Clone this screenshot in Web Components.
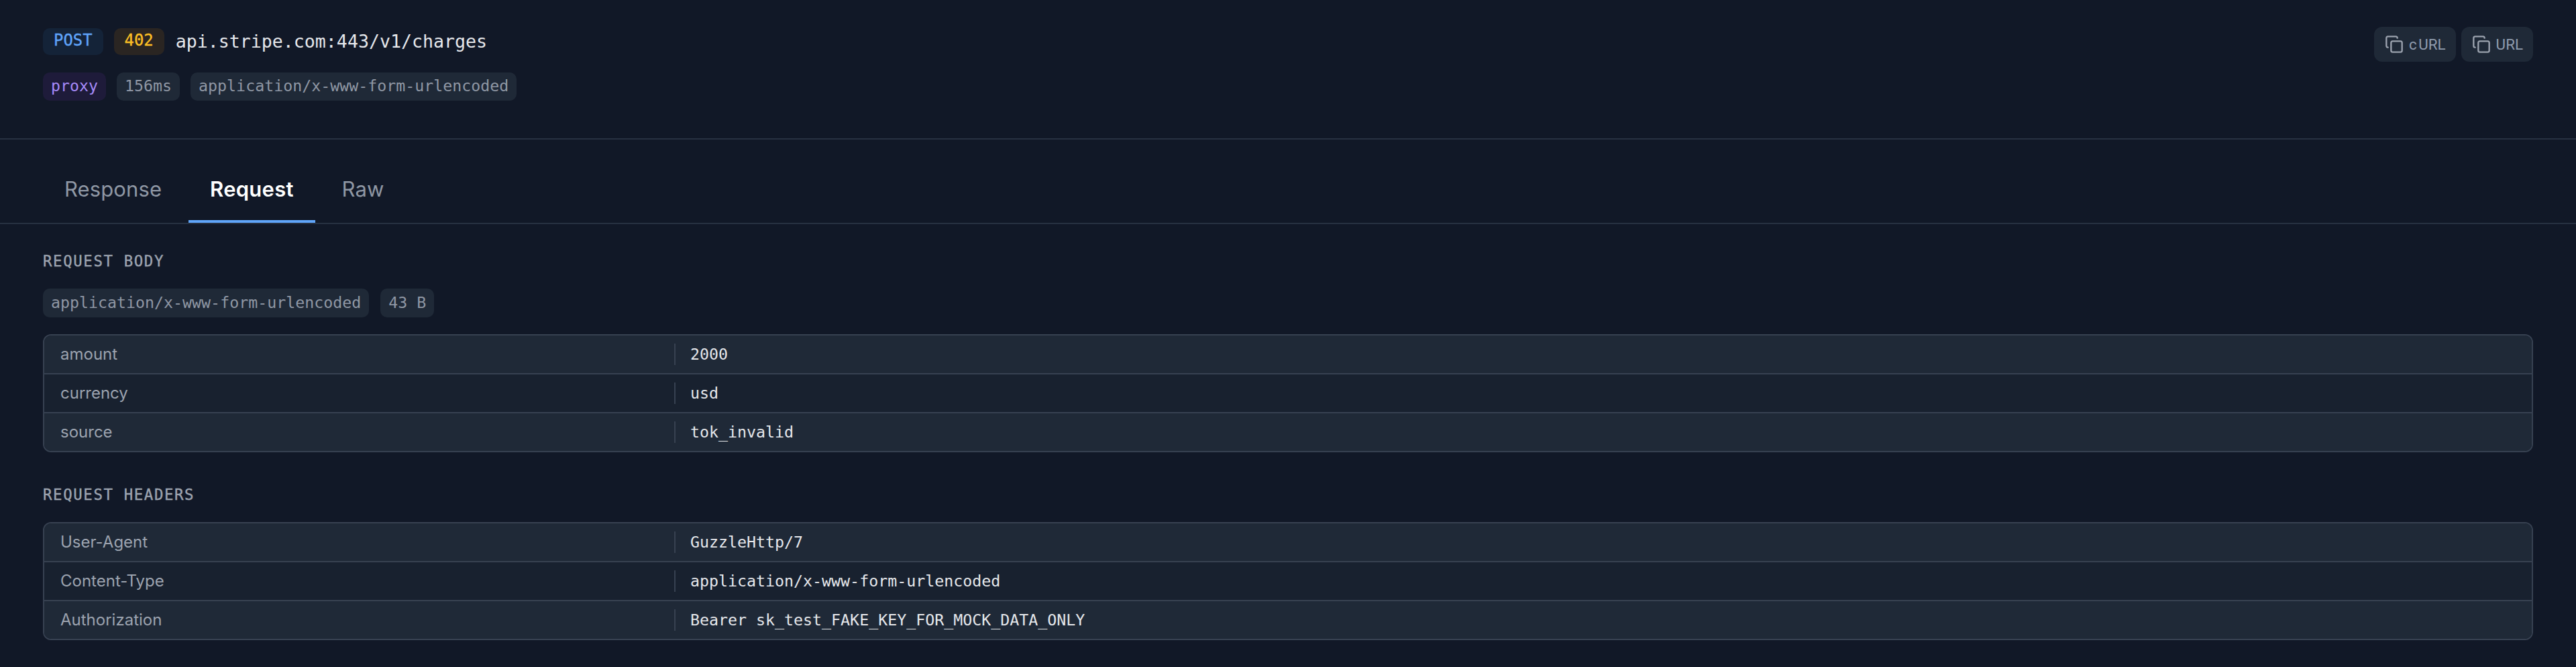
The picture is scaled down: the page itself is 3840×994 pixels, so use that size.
<!DOCTYPE html>
<html lang="en"><head><meta charset="utf-8"><title>Request detail</title>
<style>
html,body{margin:0;padding:0;background:#111827;}
body{font-family:Inter,"Noto Sans",sans-serif;color:#e5e7eb;}
</style></head>
<body>
<x-panel>
  <x-header slot="header">
    <x-badge slot="line1" kind="post" size="lg">POST</x-badge>
    <x-badge slot="line1" kind="warn" size="lg">402</x-badge>
    <x-url slot="line1">api.stripe.com:443/v1/charges</x-url>
    <x-badge slot="line2" kind="proxy" h="42">proxy</x-badge>
    <x-badge slot="line2" h="42">156ms</x-badge>
    <x-badge slot="line2" h="42">application/x-www-form-urlencoded</x-badge>
    <x-copy slot="actions"><span style="letter-spacing:2.4px">c</span>URL</x-copy>
    <x-copy slot="actions">URL</x-copy>
  </x-header>
  <x-tabs slot="tabs">
    <x-tab>Response</x-tab>
    <x-tab active>Request</x-tab>
    <x-tab>Raw</x-tab>
  </x-tabs>
  <x-section title="REQUEST BODY">
    <x-badge slot="meta">application/x-www-form-urlencoded</x-badge>
    <x-badge slot="meta">43 B</x-badge>
    <x-kv-table>
      <x-kv-row k="amount">2000</x-kv-row>
      <x-kv-row k="currency">usd</x-kv-row>
      <x-kv-row k="source">tok_invalid</x-kv-row>
    </x-kv-table>
  </x-section>
  <x-section title="REQUEST HEADERS">
    <x-kv-table>
      <x-kv-row k="User-Agent">GuzzleHttp/7</x-kv-row>
      <x-kv-row k="Content-Type">application/x-www-form-urlencoded</x-kv-row>
      <x-kv-row k="Authorization">Bearer sk_test_FAKE_KEY_FOR_MOCK_DATA_ONLY</x-kv-row>
    </x-kv-table>
  </x-section>
</x-panel>
<script>
const MONO='"DejaVu Sans Mono","Liberation Mono",monospace';
function def(name,html,extra){
  customElements.define(name,class extends HTMLElement{
    constructor(){super();this.attachShadow({mode:'open'}).innerHTML=html(this);}
    connectedCallback(){ if(extra) extra(this); }
  });
}
def('x-panel',()=>`<style>:host{display:block;background:#111827;min-height:994px}
main{padding:40px 64px 40px;display:flex;flex-direction:column;gap:48px}</style>
<slot name="header"></slot><slot name="tabs"></slot><main><slot></slot></main>`);
def('x-header',()=>`<style>:host{display:flex;justify-content:space-between;align-items:flex-start;padding:40px 64px 56px;border-bottom:2px solid #273141}
.left{padding-top:2px;display:flex;flex-direction:column;gap:26px}
.line{display:flex;align-items:center;gap:16px}
.actions{display:flex;gap:8px}</style>
<div class="left"><div class="line"><slot name="line1"></slot></div><div class="line"><slot name="line2"></slot></div></div>
<div class="actions"><slot name="actions"></slot></div>`);
def('x-badge',el=>{
  const k=el.getAttribute('kind'),lg=el.getAttribute('size')==='lg';
  const h=el.getAttribute('h')||(lg?40:43);
  const c={post:['#142338','#60a5fa'],warn:['#2a2522','#fbbf24'],proxy:['#1e1b3a','#a78bfa']}[k]||['#1f2937','#8f97a4'];
  return `<style>:host{display:inline-flex;align-items:center;box-sizing:border-box;height:${h}px;padding:0 ${lg?16:12}px 2px;border-radius:10px;background:${c[0]};color:${c[1]};font:400 ${lg?23.9:23.27}px/1 ${MONO};${lg?'-webkit-text-stroke:.35px currentColor;':''}white-space:pre}</style><slot></slot>`;
});
def('x-url',()=>`<style>:host{display:inline-block;margin-left:1px;font:400 26.6px/40px ${MONO};color:#e5e7eb;white-space:pre}</style><slot></slot>`);
def('x-copy',()=>`<style>:host{display:inline-flex;align-items:center;gap:8px;box-sizing:border-box;height:52px;padding:0 15px 0 16px;border-radius:12px;background:#1f2937;color:#8f9bad;font:400 22.4px/1 Roboto,Inter,sans-serif;white-space:pre}
svg{width:28px;height:28px;flex:none;display:block}</style>
<svg viewBox="0 0 24 24" fill="none" stroke="#9ca3af" stroke-width="2" stroke-linecap="round" stroke-linejoin="round"><rect x="8" y="8" width="14" height="14" rx="2"/><path d="M4 16c-1.1 0-2-.9-2-2V4c0-1.1.9-2 2-2h10c1.1 0 2 .9 2 2"/></svg><span><slot></slot></span>`);
def('x-tabs',()=>`<style>:host{display:flex;gap:8px;padding:0 64px;border-bottom:2px solid #273141}</style><slot></slot>`);
def('x-tab',el=>{
  const a=el.hasAttribute('active');
  return `<style>:host{display:block;box-sizing:border-box;height:124px;padding:55px 32px 0;border-bottom:4px solid ${a?'#60a5fa':'transparent'};color:${a?'#fff':'#8f97a4'};font:${a?600:400} 31px/1.25 Inter,sans-serif;letter-spacing:${a?0.25:0.1}px;white-space:pre}</style><slot></slot>`;
});
def('x-section',el=>`<style>:host{display:block}
h2{margin:0 0 28px;height:28px;font:400 22.4px/30px ${MONO};letter-spacing:1.6px;color:#9ca3af;-webkit-text-stroke:.4px #9ca3af}
.meta{display:flex;gap:17px;margin-bottom:25px}
.meta:not(.has){display:none}</style>
<h2>${el.getAttribute('title')}</h2><div class="meta"><slot name="meta"></slot></div><slot></slot>`,
el=>{ if(el.querySelector('[slot=meta]')) el.shadowRoot.querySelector('.meta').classList.add('has'); });
def('x-kv-table',()=>`<style>:host{display:block;border:2px solid #374151;border-radius:12px;overflow:hidden}</style><slot></slot>`);
def('x-kv-row',el=>`<style>:host{display:grid;grid-template-columns:939px 1fr;align-items:center;box-sizing:border-box;height:58px;padding:0;background:#1f2937;border-bottom:2px solid #374151}
:host(:nth-child(even)){background:#18212f}
:host(:last-child){height:56px;border-bottom:0}
.k{padding-left:24px;font:400 24px/32px Inter,sans-serif;color:#9ca3af}
.v{border-left:2px solid #374151;padding-left:22px;font:400 23.27px/32px ${MONO};color:#e5e7eb;white-space:pre}</style>
<div class="k">${el.getAttribute('k')}</div><div class="v"><slot></slot></div>`);
</script>
</body></html>
